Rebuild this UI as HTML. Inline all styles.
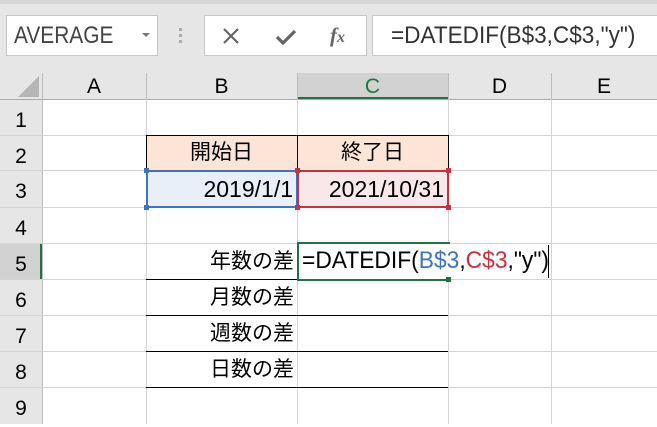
<!DOCTYPE html><html><head><meta charset="utf-8"><style>
*{margin:0;padding:0;box-sizing:border-box}
body{width:657px;height:424px;overflow:hidden;background:#fff;font-family:"Liberation Sans","Noto Sans CJK JP",sans-serif;position:relative}
.a{position:absolute}
.hl{position:absolute;height:1px;background:#d4d4d4}
.vl{position:absolute;width:1px;background:#d4d4d4}
.t{position:absolute;font-size:21px;color:#000;white-space:nowrap;line-height:36px}
.rh{position:absolute;left:0;width:42px;text-align:center;font-size:21px;line-height:36px;color:#000}
.ch{position:absolute;top:73px;height:26px;text-align:center;font-size:21px;line-height:28px}
</style></head><body>
<div class="a" style="left:0;top:0;width:657px;height:99px;background:#e6e6e6"></div>
<div class="a" style="left:0;top:0;width:657px;height:4px;background:#d6d6d6"></div>
<div class="a" style="left:6px;top:15px;width:152px;height:41px;background:#fff;border:1px solid #c6c6c6"></div>
<div class="a" style="left:14px;top:22px;font-size:24px;color:#444;transform:scaleX(.87);transform-origin:left">AVERAGE</div>
<div class="a" style="left:142px;top:33px;width:0;height:0;border-left:4px solid transparent;border-right:4px solid transparent;border-top:4px solid #777"></div>
<div class="a" style="left:179px;top:28px;width:3px;height:3px;background:#aaa;box-shadow:0 6px #aaa,0 12px #aaa"></div>
<div class="a" style="left:204px;top:15px;width:163px;height:41px;background:#fff;border:1px solid #c6c6c6"></div>
<svg class="a" style="left:222px;top:27px" width="18" height="18"><path d="M2 2L16 16M16 2L2 16" stroke="#666" stroke-width="2.2"/></svg>
<svg class="a" style="left:275px;top:28px" width="22" height="18"><path d="M2 9L8 15L20 3" stroke="#666" stroke-width="3.2" fill="none"/></svg>
<div class="a" style="left:330px;top:23px;font-family:'Liberation Serif',serif;font-style:italic;font-size:21px;color:#666;font-weight:bold">f<span style="font-size:16px">x</span></div>
<div class="a" style="left:372px;top:15px;width:290px;height:41px;background:#fff;border:1px solid #c6c6c6"></div>
<div class="a" style="left:391px;top:22px;font-size:24px;color:#333;transform:scaleX(.94);transform-origin:left">=DATEDIF(B$3,C$3,"y")</div>
<div class="a" style="left:297px;top:73px;width:151px;height:26px;background:#d2d2d2"></div>
<div class="a" style="left:297px;top:97px;width:151px;height:2px;background:#217346"></div>
<svg class="a" style="left:18px;top:76px" width="22" height="22"><path d="M21 0L21 21L0 21Z" fill="#b5b5b5"/></svg>
<div class="vl" style="left:42px;top:73px;height:26px;background:#bcbcbc"></div>
<div class="vl" style="left:146px;top:73px;height:26px;background:#bcbcbc"></div>
<div class="vl" style="left:297px;top:73px;height:26px;background:#bcbcbc"></div>
<div class="vl" style="left:448px;top:73px;height:26px;background:#bcbcbc"></div>
<div class="vl" style="left:551px;top:73px;height:26px;background:#bcbcbc"></div>
<div class="hl" style="left:0;top:99px;width:657px;background:#aaa"></div>
<div class="ch" style="left:42px;width:104px">A</div>
<div class="ch" style="left:146px;width:151px">B</div>
<div class="ch" style="left:297px;width:151px;color:#217346">C</div>
<div class="ch" style="left:448px;width:103px">D</div>
<div class="ch" style="left:551px;width:106px">E</div>
<div class="a" style="left:0;top:100px;width:42px;height:324px;background:#e6e6e6"></div>
<div class="a" style="left:0;top:243px;width:42px;height:37px;background:#d2d2d2"></div>
<div class="a" style="left:40px;top:243px;width:2px;height:37px;background:#217346"></div>
<div class="vl" style="left:42px;top:99px;height:325px;background:#bcbcbc"></div>
<div class="rh" style="top:103px">1</div><div class="rh" style="top:139px">2</div><div class="rh" style="top:174px">3</div><div class="rh" style="top:211px">4</div><div class="rh" style="top:247px">5</div><div class="rh" style="top:283px">6</div><div class="rh" style="top:319px">7</div><div class="rh" style="top:355px">8</div><div class="rh" style="top:391px">9</div>
<div class="hl" style="left:0;top:135px;width:657px"></div>
<div class="hl" style="left:0;top:170px;width:657px"></div>
<div class="hl" style="left:0;top:207px;width:657px"></div>
<div class="hl" style="left:0;top:243px;width:657px"></div>
<div class="hl" style="left:0;top:279px;width:657px"></div>
<div class="hl" style="left:0;top:315px;width:657px"></div>
<div class="hl" style="left:0;top:351px;width:657px"></div>
<div class="hl" style="left:0;top:387px;width:657px"></div>
<div class="vl" style="left:146px;top:99px;height:325px"></div>
<div class="vl" style="left:297px;top:99px;height:325px"></div>
<div class="vl" style="left:448px;top:99px;height:325px"></div>
<div class="vl" style="left:551px;top:99px;height:325px"></div>
<div class="a" style="left:146px;top:135px;width:303px;height:36px;background:#fce4d6;border:1px solid #000"></div>
<div class="a" style="left:297px;top:135px;width:1px;height:36px;background:#000"></div>
<div class="t" style="left:146px;top:135px;width:151px;text-align:center">開始日</div>
<div class="t" style="left:297px;top:135px;width:151px;text-align:center">終了日</div>
<div class="a" style="left:146px;top:170px;width:152px;height:38px;background:#e8eff9;border:2px solid #3c73c4"></div>
<div class="a" style="left:297px;top:170px;width:152px;height:38px;background:#f8e8ea;border:2px solid #c8323f"></div>
<div class="t" style="left:146px;top:171px;width:147px;text-align:right;font-size:23px">2019/1/1</div>
<div class="t" style="left:297px;top:171px;width:147px;text-align:right;font-size:23px">2021/10/31</div>
<div class="a" style="left:144px;top:168px;width:5px;height:5px;background:#3c73c4"></div>
<div class="a" style="left:144px;top:205px;width:5px;height:5px;background:#3c73c4"></div>
<div class="a" style="left:295px;top:168px;width:5px;height:5px;background:#c8323f"></div>
<div class="a" style="left:295px;top:205px;width:5px;height:5px;background:#c8323f"></div>
<div class="a" style="left:446px;top:168px;width:5px;height:5px;background:#c8323f"></div>
<div class="a" style="left:446px;top:205px;width:5px;height:5px;background:#c8323f"></div>
<div class="a" style="left:146px;top:279px;width:151px;height:1px;background:#000"></div>
<div class="a" style="left:146px;top:315px;width:302px;height:1px;background:#000"></div>
<div class="a" style="left:146px;top:351px;width:302px;height:1px;background:#000"></div>
<div class="a" style="left:146px;top:387px;width:302px;height:1px;background:#000"></div>
<div class="t" style="left:146px;top:244px;width:148px;text-align:right">年数の差</div>
<div class="t" style="left:146px;top:280px;width:148px;text-align:right">月数の差</div>
<div class="t" style="left:146px;top:316px;width:148px;text-align:right">週数の差</div>
<div class="t" style="left:146px;top:352px;width:148px;text-align:right">日数の差</div>
<div class="a" style="left:298px;top:244px;width:252px;height:35px;background:#fff"></div>
<div class="a" style="left:297px;top:242px;width:153px;height:39px;border:2px solid #217346;border-right:none"></div>
<div class="a" style="left:446px;top:277px;width:5px;height:5px;background:#217346"></div>
<div class="a" style="left:548px;top:245px;width:1px;height:33px;background:#000"></div>
<div class="t" style="left:302px;top:243px;font-size:24px;transform:scaleX(.95);transform-origin:left">=DATEDIF(<span style="color:#3c73c4">B$3</span>,<span style="color:#c8323f">C$3</span>,"y")</div>
</body></html>
